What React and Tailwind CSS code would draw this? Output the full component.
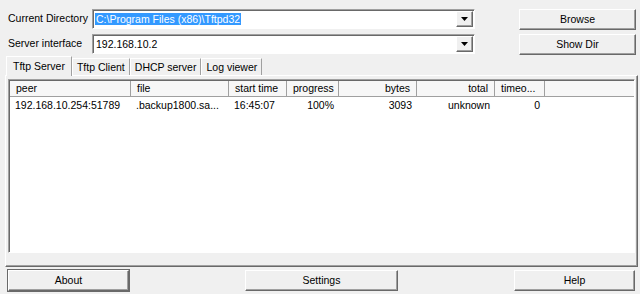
import React from "react";

const raised =
  "bg-[#f0f0f0] border border-t-white border-l-white border-r-[#696969] border-b-[#696969] shadow-[inset_-1px_-1px_0_#a0a0a0]";
const sunken =
  "bg-white border border-t-[#a0a0a0] border-l-[#a0a0a0] border-r-white border-b-white shadow-[inset_1px_1px_0_#696969]";

const Combo = ({ value, selected }) => (
  <div className={`flex items-center h-[20px] w-[383px] ${sunken}`}>
    <div className="flex-1 pl-[2px] pt-[1px] overflow-hidden whitespace-nowrap">
      {selected ? (
        <span className="bg-[#3399ff] text-white px-[1px]">{value}</span>
      ) : (
        <span className="px-[1px]">{value}</span>
      )}
    </div>
    <div className={`flex items-center justify-center w-[17px] h-[16px] mr-[1px] ${raised}`}>
      <svg width="7" height="4" viewBox="0 0 7 4">
        <path d="M0 0h7L3.5 4z" fill="#000" />
      </svg>
    </div>
  </div>
);

const Btn = ({ label, w, focus }) => (
  <div
    className={`flex items-center justify-center h-[21px] ${w} ${raised} ${
      focus ? "outline outline-1 outline-[#696969]" : ""
    }`}
  >
    {label}
  </div>
);

const columns = [
  { name: "peer", w: "w-[121px]", align: "text-left" },
  { name: "file", w: "w-[98px]", align: "text-left" },
  { name: "start time", w: "w-[58px]", align: "text-left" },
  { name: "progress", w: "w-[52px]", align: "text-left" },
  { name: "bytes", w: "w-[78px]", align: "text-right" },
  { name: "total", w: "w-[78px]", align: "text-right" },
  { name: "timeo...", w: "w-[50px]", align: "text-left" },
];

const row = [
  { v: "192.168.10.254:51789", align: "text-left" },
  { v: ".backup1800.sa...", align: "text-left" },
  { v: "16:45:07", align: "text-left" },
  { v: "100%", align: "text-right" },
  { v: "3093", align: "text-right" },
  { v: "unknown", align: "text-right" },
  { v: "0", align: "text-right" },
];

const tabs = ["Tftp Server", "Tftp Client", "DHCP server", "Log viewer"];

export default function App() {
  return (
    <div
      className="w-[640px] h-[294px] bg-[#f0f0f0] text-[10.5px] text-black overflow-hidden"
      style={{ fontFamily: '"Liberation Sans", Arial, sans-serif' }}
    >
      {/* TOP */}
      <div className="flex pt-[9px] pl-[8px]">
        <div className="flex flex-col gap-[5px]">
          <div className="flex items-center">
            <div className="w-[84px]">Current Directory</div>
            <Combo value="C:\Program Files (x86)\Tftpd32" selected />
          </div>
          <div className="flex items-center">
            <div className="w-[84px]">Server interface</div>
            <Combo value="192.168.10.2" />
          </div>
        </div>
        <div className="flex flex-col gap-[4px] ml-[44px]">
          <Btn label="Browse" w="w-[117px]" />
          <Btn label="Show Dir" w="w-[117px]" />
        </div>
      </div>

      {/* TABS */}
      <div className="flex items-end pl-[6px] h-[20px]">
        {tabs.map((t, i) =>
          i === 0 ? (
            <div
              key={t}
              className="h-[20px] px-[6px] pt-[2px] bg-[#f0f0f0] border border-b-0 border-t-white border-l-white border-r-[#a0a0a0] relative z-10 -mb-[1px]"
            >
              {t}
            </div>
          ) : (
            <div
              key={t}
              className="h-[17px] px-[4px] pt-[1px] bg-[#f0f0f0] border border-b-0 border-t-white border-l-white border-r-[#a0a0a0]"
            >
              {t}
            </div>
          )
        )}
      </div>

      {/* PANEL */}
      <div className="mx-[5px] w-[633px] h-[192px] border border-t-white border-l-white border-r-[#696969] border-b-[#696969] shadow-[inset_-1px_-1px_0_#a0a0a0] px-[2px] pt-[3px]">
        <div className={`w-[627px] h-[174px] ${sunken} pl-[1px] pt-[1px]`}>
          <div className="flex h-[16px] bg-[#f7f7f7] border-b border-[#a0a0a0]">
            {columns.map((c) => (
              <div
                key={c.name}
                className={`${c.w} ${c.align} px-[6px] border-r border-[#a0a0a0] leading-[15px] whitespace-nowrap`}
              >
                {c.name}
              </div>
            ))}
            <div className="flex-1" />
          </div>
          <div className="flex h-[17px] items-center">
            {row.map((c, i) => (
              <div
                key={i}
                className={`${columns[i].w} ${c.align} px-[5px] whitespace-nowrap overflow-hidden`}
              >
                {c.v}
              </div>
            ))}
          </div>
        </div>
      </div>

      {/* BOTTOM */}
      <div className="flex justify-between items-center pl-[8px] pr-[5px] mt-[3px]">
        <Btn label="About" w="w-[121px]" focus />
        <Btn label="Settings" w="w-[153px]" />
        <Btn label="Help" w="w-[121px]" />
      </div>
    </div>
  );
}
